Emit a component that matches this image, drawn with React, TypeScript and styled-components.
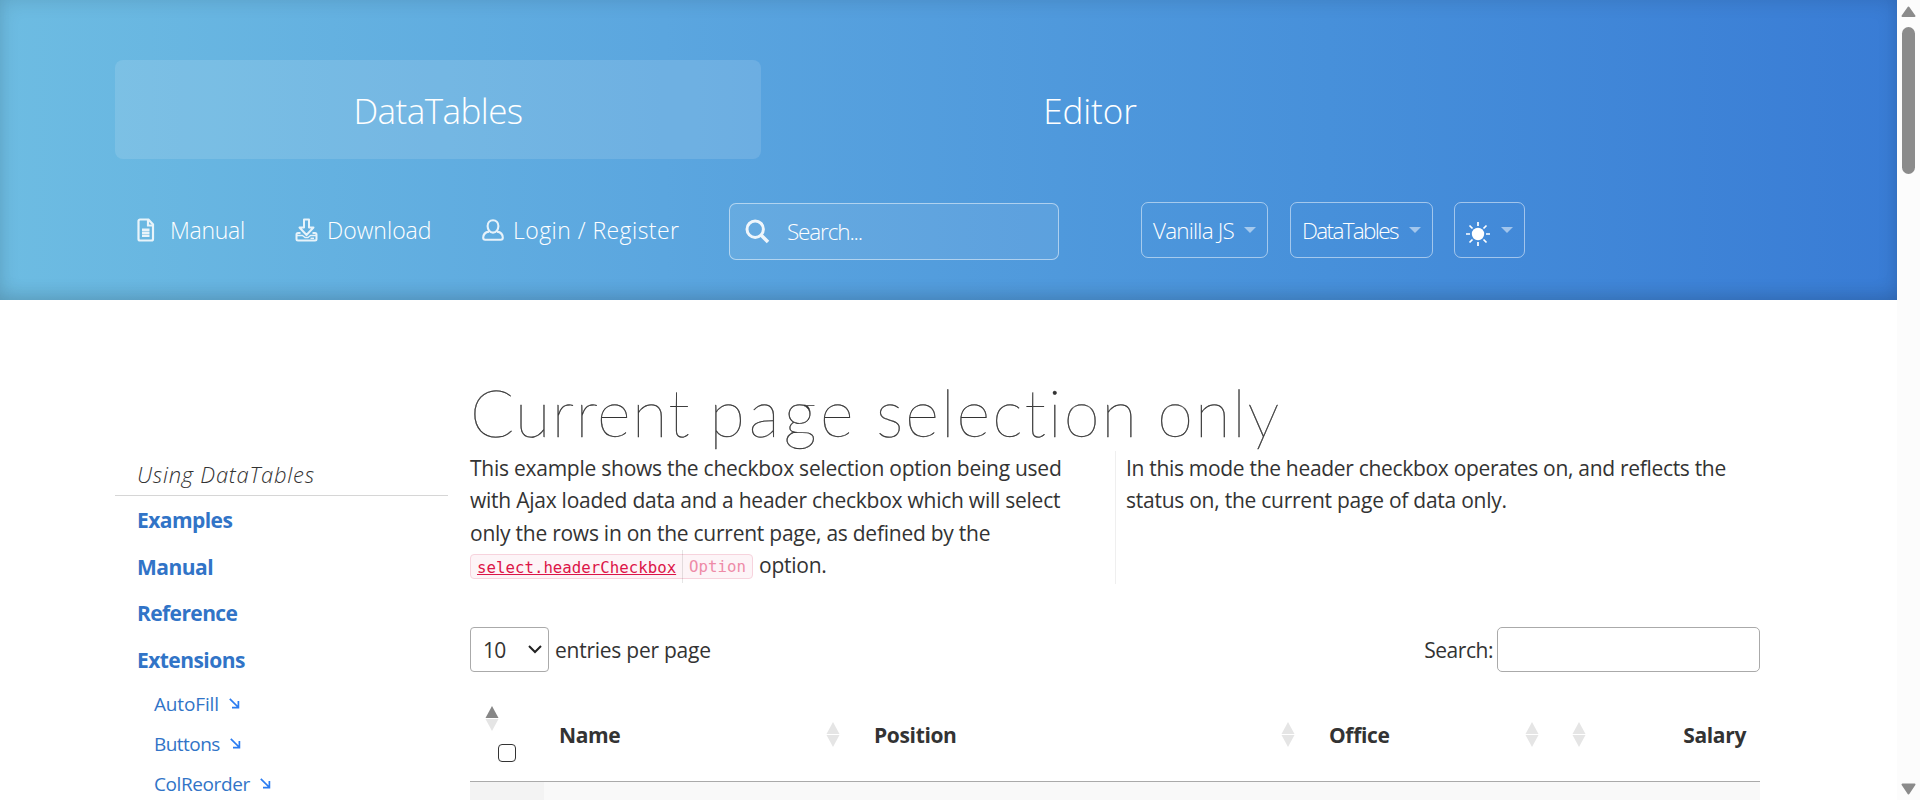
import React from 'react';
import styled, { createGlobalStyle } from 'styled-components';

const GlobalStyle = createGlobalStyle`
  * { box-sizing: border-box; }
  body { margin: 0; background: #fff; color: #333; overflow: hidden; font-family: 'Open Sans', 'Noto Sans', sans-serif; }
  a { color: inherit; text-decoration: none; }
`;

const Window = styled.div`
  display: flex;
  width: 1920px;
  height: 800px;
  overflow: hidden;
`;

const Page = styled.div`
  width: 1897px;
  height: 800px;
  overflow: hidden;
`;

const Header = styled.header`
  height: 300px;
  padding: 60px 115px 0;
  color: #fff;
  background: linear-gradient(to right, #6dbce2 0%, #5ba6df 35%, #4790da 70%, #397cd5 100%);
  box-shadow: inset 0 0 20px rgba(0, 0, 0, 0.13), inset 0 -12px 20px -8px rgba(0, 0, 0, 0.1);
`;

const ProductTabs = styled.nav`
  display: flex;
  gap: 6px;
`;

const ProductTab = styled.a<{ $active?: boolean; $spacing: number }>`
  display: flex;
  align-items: center;
  justify-content: center;
  width: 646px;
  height: 99px;
  padding-top: 2px;
  border-radius: 8px;
  font-size: 35px;
  font-weight: 300;
  letter-spacing: ${(p) => p.$spacing}px;
  background: ${(p) => (p.$active ? 'rgba(255, 255, 255, 0.12)' : 'transparent')};
`;

const Toolbar = styled.div`
  display: flex;
  align-items: center;
  height: 56px;
  margin-top: 43px;
  padding-left: 22px;
  font-weight: 300;
`;

const ToolLinks = styled.nav`
  display: grid;
  grid-template-columns: 158px 187px 247px;
`;

const ToolLink = styled.a<{ $spacing?: number; $gap: number }>`
  display: flex;
  align-items: center;
  height: 56px;
  gap: ${(p) => p.$gap}px;
  font-size: 23px;
  letter-spacing: ${(p) => p.$spacing ?? 0}px;
  white-space: nowrap;

  svg { opacity: 0.85; }
`;

const SiteSearch = styled.label`
  display: flex;
  align-items: center;
  gap: 17px;
  width: 330px;
  height: 57px;
  margin: 3px 82px 0 0;
  padding-left: 15px;
  border: 1px solid rgba(255, 255, 255, 0.5);
  border-radius: 7px;
  background: rgba(255, 255, 255, 0.08);
  font-size: 22.5px;
  letter-spacing: -1.15px;
`;

const Picker = styled.button<{ $width: number; $spacing?: number; $after?: number }>`
  display: flex;
  align-items: center;
  justify-content: space-between;
  width: ${(p) => p.$width}px;
  height: 56px;
  margin-right: ${(p) => p.$after ?? 0}px;
  padding: 1px 11px 0 11px;
  border: 1px solid rgba(255, 255, 255, 0.5);
  border-radius: 7px;
  background: transparent;
  color: #fff;
  font: 300 22.5px 'Open Sans', sans-serif;
  letter-spacing: ${(p) => p.$spacing ?? 0}px;
`;

const Caret = styled.i`
  margin-bottom: 2px;
  border: 6px solid transparent;
  border-top: 6px solid rgba(255, 255, 255, 0.5);
  border-bottom: 0;
`;

const SunSlot = styled.span`
  display: flex;
  padding-top: 7px;
`;

const Body = styled.div`
  display: grid;
  grid-template-columns: 333px 1290px;
  column-gap: 22px;
  padding: 0 0 0 115px;
`;

const Sidebar = styled.aside`
  padding-top: 155px;
`;

const SideHeading = styled.div`
  height: 41px;
  padding: 3px 0 0 22px;
  border-bottom: 1px solid #d6d6d6;
  font-size: 22px;
  line-height: 32px;
  font-style: italic;
  font-weight: 300;
  letter-spacing: 0.75px;
`;

const SideLink = styled.a<{ $spacing?: number }>`
  display: block;
  height: 46.7px;
  padding-left: 22px;
  color: #3174c7;
  font-size: 21px;
  font-weight: 700;
  line-height: 48px;
  letter-spacing: ${(p) => p.$spacing ?? -0.55}px;
`;

const SubLinks = styled.div`
  padding-top: 1px;
`;

const SubLink = styled.a<{ $spacing: number }>`
  display: flex;
  align-items: center;
  gap: 10px;
  height: 40px;
  padding-left: 39px;
  color: #3174c7;
  font-size: 19px;
  letter-spacing: ${(p) => p.$spacing}px;
`;

const Content = styled.main`
  padding-top: 80px;
`;

const Title = styled.h1`
  height: 71px;
  margin: 0;
  font-family: Lato, sans-serif;
  font-size: 65px;
  font-weight: 100;
  line-height: 65px;
  letter-spacing: 1.83px;
  word-spacing: -2px;
  white-space: nowrap;
  -webkit-text-stroke: 0.4px #333;
`;

const TitleWord = styled.span<{ $spacing: number }>`
  letter-spacing: ${(p) => p.$spacing}px;
`;

const Intro = styled.div`
  display: grid;
  grid-template-columns: 645px 645px;
  height: 133px;
  font-size: 21px;
  line-height: 32.4px;
`;

const IntroColumn = styled.p<{ $ruled?: boolean }>`
  margin: 0;
  padding: 1px 0 0 ${(p) => (p.$ruled ? 10 : 0)}px;
  border-left: ${(p) => (p.$ruled ? '1px solid #efefef' : '0')};
  white-space: nowrap;
`;

const Line = styled.span<{ $spacing?: number }>`
  display: flex;
  align-items: center;
  height: 32.4px;
  letter-spacing: ${(p) => p.$spacing ?? -0.25}px;
`;

const OptionTag = styled.code`
  display: flex;
  align-items: center;
  width: 283px;
  height: 25px;
  margin: 3px 6px 0 0;
  border: 1px solid #f7d3dd;
  border-radius: 4px;
  background: #fdf4f7;
  font-family: 'DejaVu Sans Mono', monospace;
  font-size: 15.75px;
  letter-spacing: 0;
`;

const OptionName = styled.a`
  display: flex;
  align-items: center;
  width: 212px;
  height: 33px;
  padding: 2px 0 0 6px;
  border-right: 1px solid rgba(0, 0, 0, 0.1);
  color: #dc1448;
  text-decoration: underline;
`;

const OptionKind = styled.span`
  padding-left: 6px;
  color: #ee8ba7;
`;

const TableControls = styled.div`
  display: flex;
  align-items: center;
  height: 45px;
  margin-top: 43px;
  font-size: 21px;
`;

const LengthSelect = styled.div`
  display: flex;
  align-items: center;
  justify-content: space-between;
  width: 79px;
  height: 45px;
  margin-right: 6px;
  padding: 0 6px 0 12px;
  border: 1px solid #aaa;
  border-radius: 4px;
  letter-spacing: -0.7px;
`;

const ControlLabel = styled.span<{ $spacing: number }>`
  padding-top: 1px;
  letter-spacing: ${(p) => p.$spacing}px;
`;

const FilterInput = styled.input`
  width: 263px;
  height: 45px;
  margin-left: 4px;
  border: 1px solid #aaa;
  border-radius: 5px;
  background: transparent;
`;

const Spacer = styled.div`
  flex: 1;
`;

const TableHead = styled.div`
  display: grid;
  grid-template-columns: 74px 315px 455px 244px 202px;
  height: 110px;
  border-bottom: 1px solid #aaa;
`;

const HeadCell = styled.div<{ $reverse?: boolean }>`
  display: flex;
  flex-direction: ${(p) => (p.$reverse ? 'row-reverse' : 'row')};
  align-items: center;
  justify-content: space-between;
  padding: ${(p) => (p.$reverse ? '16px 14px 0 14px' : '16px 19px 0 15px')};
  font-size: 21px;
  font-weight: 700;
  letter-spacing: -0.35px;
`;

const SelectCell = styled.div`
  display: flex;
  flex-direction: column;
  padding: 34px 0 0 15px;
`;

const Checkbox = styled.input`
  appearance: none;
  width: 18px;
  height: 18px;
  margin: 13px 0 0 13px;
  border: 1.4px solid #333;
  border-radius: 4px;
  background: #fff;
`;

const FirstRow = styled.div`
  display: grid;
  grid-template-columns: 74px 1fr;
  height: 20px;
  background: #f9f9f9;
`;

const SortedCell = styled.div`
  background: #f3f3f3;
`;

const Scrollbar = styled.div`
  display: flex;
  flex-direction: column;
  align-items: center;
  width: 23px;
  height: 800px;
  padding: 6px 0 5px;
  background: #fcfcfc;
`;

const Thumb = styled.div`
  width: 13px;
  height: 147px;
  margin-top: 9px;
  border-radius: 7px;
  background: #8b8b8b;
`;

const FileIcon = () => (
  <svg width="18" height="24" viewBox="0 0 18 24" fill="none" stroke="#fff" strokeWidth="2.2">
    <path d="M3 1.5h8.5l4.5 5V21a1.5 1.5 0 0 1-1.500 1.500H3A1.500 1.500 0 0 1 1.500 21V3A1.500 1.500 0 0 1 3 1.500z" />
    <path d="M11 2v5.500h5" />
    <path d="M5 11.700h7.500M5 14.800h7.500M5 17.800h7.500" strokeWidth="2.400" />
  </svg>
);

const DownloadIcon = () => (
  <svg width="23" height="24" viewBox="0 0 23 24" fill="none" stroke="#fff" strokeWidth="2" strokeLinejoin="round">
    <path d="M9 1.5h5v8h4.500l-7 7.500-7-7.500H9z" />
    <path d="M5.500 15H3a1.500 1.500 0 0 0-1.500 1.500V21A1.500 1.500 0 0 0 3 22.500h17a1.500 1.500 0 0 0 1.500-1.500v-4.500A1.500 1.500 0 0 0 20 15h-2.500" />
    <path d="M2 17.500h5.500l2.500 2h3l2.500-2H21" strokeWidth="1.500" />
    <path d="M15.500 20.300h3.500" strokeWidth="1.400" />
  </svg>
);

const UserIcon = () => (
  <svg width="22" height="22" viewBox="0 0 22 22" fill="none" stroke="#fff" strokeWidth="2.1">
    <path d="M11 1.2c3.300 0 5.400 2.500 5.400 5.800S14.300 13.600 11 13.600 5.600 10.300 5.600 7 7.700 1.200 11 1.200z" />
    <path d="M7 12.600c-3.500.5-5.800 3-5.800 6.200 0 1.200.8 2 2 2h15.600c1.200 0 2-.8 2-2 0-3.200-2.300-5.700-5.800-6.200" />
  </svg>
);

const SearchIcon = () => (
  <svg width="25" height="25" viewBox="0 0 25 25" fill="none" stroke="#fff" opacity=".9">
    <circle cx="10.200" cy="10.200" r="8.200" strokeWidth="3" />
    <path d="M16 16l7 7" strokeWidth="3.600" />
  </svg>
);

const SunIcon = () => (
  <svg width="24" height="24" viewBox="0 0 24 24" stroke="#fff" strokeWidth="1.700">
    <circle cx="12" cy="12" r="6.200" fill="#fff" stroke="none" />
    <path d="M12 0v4M12 20v4M0 12h4M20 12h4M3.500 3.500l3 3M17.500 17.500l3 3M3.500 20.500l3-3M17.500 6.500l3-3" />
  </svg>
);

const DiagonalArrow = () => (
  <svg width="11" height="11" viewBox="0 0 11 11" fill="none" stroke="#2a7bf0" strokeWidth="1.700">
    <path d="M.8 .8l8.200 8.200M9.400 3v6.600H3" />
  </svg>
);

const SortIcon = ({ up = '#e5e5e5' }: { up?: string }) => (
  <svg width="14" height="25" viewBox="0 0 14 25">
    <path d="M7 0l6.500 12H.5z" fill={up} />
    <path d="M7 25l6.500-12H.5z" fill="#e5e5e5" />
  </svg>
);

const SelectChevron = () => (
  <svg width="14" height="9" viewBox="0 0 14 9" fill="none" stroke="#222" strokeWidth="2">
    <path d="M1 1l6 6 6-6" />
  </svg>
);

const ScrollArrow = ({ down = false }: { down?: boolean }) => (
  <svg width="15" height="12" viewBox="0 0 15 12" fill="#8b8b8b" stroke="#8b8b8b" strokeLinejoin="round" strokeWidth="2">
    <path d={down ? 'M1.500 1.500h12L7.500 10.500z' : 'M1.500 10h12L7.500 1.500z'} />
  </svg>
);

const extensions = [
  { name: 'AutoFill', spacing: -0.15 },
  { name: 'Buttons', spacing: -0.55 },
  { name: 'ColReorder', spacing: -0.4 },
];

export default function App() {
  return (
    <Window>
      <GlobalStyle />
      <Page>
        <Header>
          <ProductTabs>
            <ProductTab $active $spacing={-0.55}>DataTables</ProductTab>
            <ProductTab $spacing={-0.1}>Editor</ProductTab>
          </ProductTabs>
          <Toolbar>
            <ToolLinks>
              <ToolLink $gap={15} $spacing={-0.3}><FileIcon />Manual</ToolLink>
              <ToolLink $gap={9}><DownloadIcon />Download</ToolLink>
              <ToolLink $gap={9} $spacing={0.45}><UserIcon />Login / Register</ToolLink>
            </ToolLinks>
            <SiteSearch><SearchIcon /><span>Search...</span></SiteSearch>
            <Picker $width={127} $spacing={-0.8} $after={22}><span>Vanilla JS</span><Caret /></Picker>
            <Picker $width={143} $spacing={-1.65} $after={21}><span>DataTables</span><Caret /></Picker>
            <Picker $width={71}><SunSlot><SunIcon /></SunSlot><Caret /></Picker>
          </Toolbar>
        </Header>
        <Body>
          <Sidebar>
            <SideHeading>Using DataTables</SideHeading>
            <SideLink>Examples</SideLink>
            <SideLink $spacing={-0.5}>Manual</SideLink>
            <SideLink $spacing={-0.6}>Reference</SideLink>
            <SideLink>Extensions</SideLink>
            <SubLinks>
              {extensions.map(({ name, spacing }) => (
                <SubLink key={name} $spacing={spacing}>{name}<DiagonalArrow /></SubLink>
              ))}
            </SubLinks>
          </Sidebar>
          <Content>
            <Title>
              <TitleWord $spacing={1.4}>Current</TitleWord>{' '}
              <TitleWord $spacing={4.1}>page</TitleWord>{' '}
              <TitleWord $spacing={2.1}>selection</TitleWord>{' '}
              <TitleWord $spacing={1.83}>only</TitleWord>
            </Title>
            <Intro>
              <IntroColumn>
                <Line>This example shows the checkbox selection option being used</Line>
                <Line>with Ajax loaded data and a header checkbox which will select</Line>
                <Line>only the rows in on the current page, as defined by the</Line>
                <Line>
                  <OptionTag>
                    <OptionName>select.headerCheckbox</OptionName>
                    <OptionKind>Option</OptionKind>
                  </OptionTag>
                  option.
                </Line>
              </IntroColumn>
              <IntroColumn $ruled>
                <Line $spacing={-0.31}>In this mode the header checkbox operates on, and reflects the</Line>
                <Line>status on, the current page of data only.</Line>
              </IntroColumn>
            </Intro>
            <TableControls>
              <LengthSelect>10<SelectChevron /></LengthSelect>
              <ControlLabel $spacing={-0.25}>entries per page</ControlLabel>
              <Spacer />
              <ControlLabel $spacing={-0.45}>Search:</ControlLabel>
              <FilterInput />
            </TableControls>
            <TableHead>
              <SelectCell>
                <SortIcon up="#868686" />
                <Checkbox type="checkbox" />
              </SelectCell>
              <HeadCell>Name<SortIcon /></HeadCell>
              <HeadCell>Position<SortIcon /></HeadCell>
              <HeadCell>Office<SortIcon /></HeadCell>
              <HeadCell $reverse>Salary<SortIcon /></HeadCell>
            </TableHead>
            <FirstRow><SortedCell /></FirstRow>
          </Content>
        </Body>
      </Page>
      <Scrollbar>
        <ScrollArrow />
        <Thumb />
        <Spacer />
        <ScrollArrow down />
      </Scrollbar>
    </Window>
  );
}
